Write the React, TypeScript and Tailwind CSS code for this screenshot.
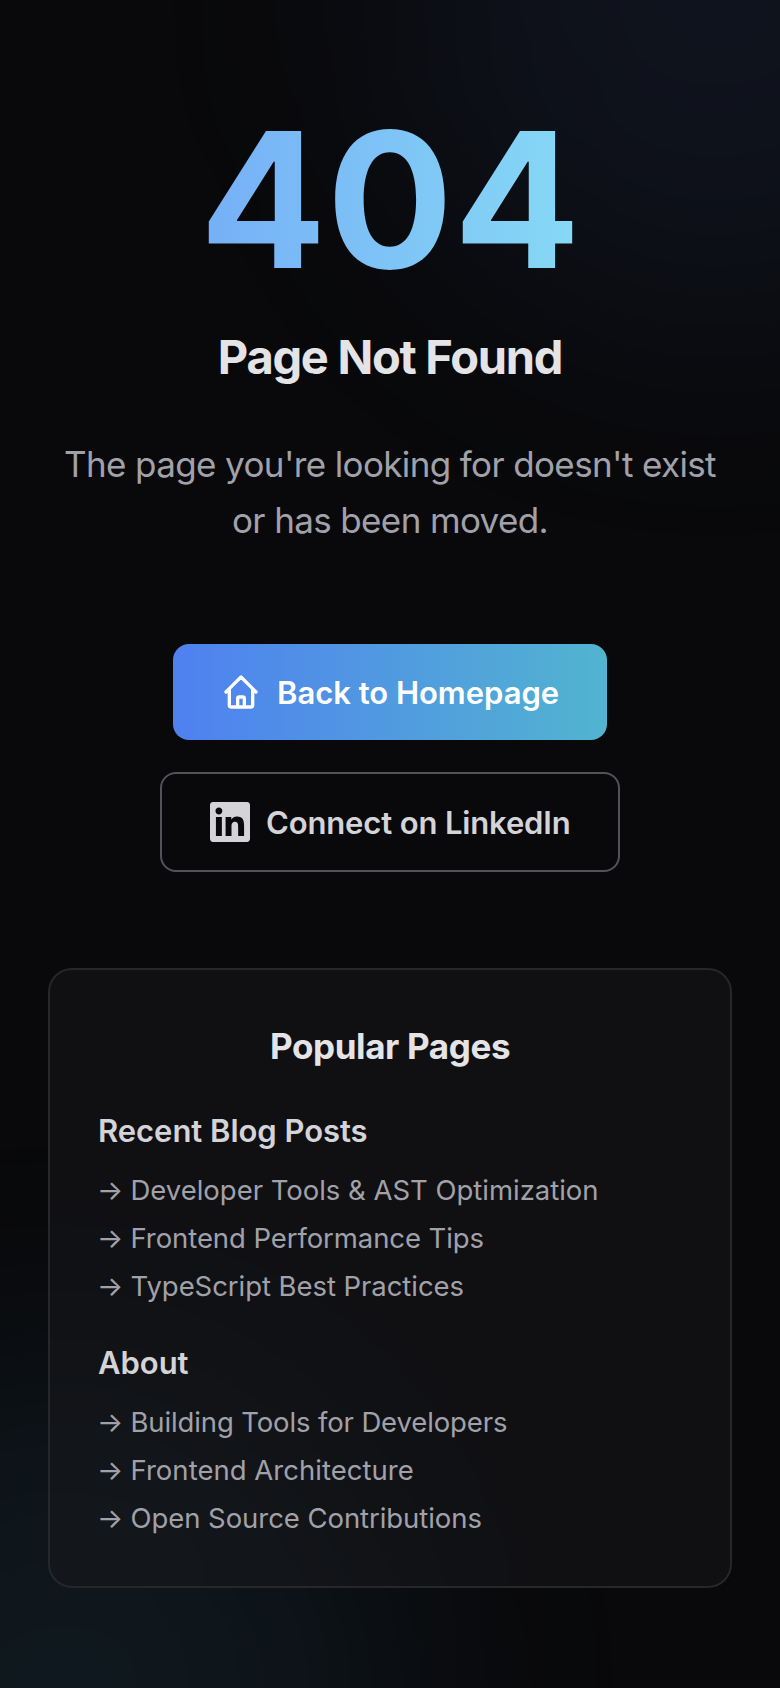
const sections = [
  {
    title: "Recent Blog Posts",
    links: [
      { label: "Developer Tools & AST Optimization", tracking: "tracking-[-0.02px]" },
      { label: "Frontend Performance Tips", tracking: "tracking-[-0.08px]" },
      { label: "TypeScript Best Practices", tracking: "tracking-[-0.06px]" },
    ],
  },
  {
    title: "About",
    links: [
      { label: "Building Tools for Developers", tracking: "tracking-[-0.13px]" },
      { label: "Frontend Architecture", tracking: "tracking-[0.02px]" },
      { label: "Open Source Contributions", tracking: "tracking-[-0.06px]" },
    ],
  },
];

function HomeIcon() {
  return (
    <svg className="size-10 shrink-0" viewBox="0 0 24 24" fill="none" stroke="currentColor" strokeWidth={2} strokeLinecap="round" strokeLinejoin="round">
      <path d="M3 12l2-2m0 0l7-7 7 7M5 10v10a1 1 0 001 1h3m10-11l2 2m-2-2v10a1 1 0 01-1 1h-3m-6 0a1 1 0 001-1v-4a1 1 0 011-1h2a1 1 0 011 1v4a1 1 0 001 1m-6 0h6" />
    </svg>
  );
}

function LinkedInIcon() {
  return (
    <svg className="size-10 shrink-0" viewBox="0 0 24 24" fill="currentColor">
      <path d="M20.447 20.452h-3.554v-5.569c0-1.328-.027-3.037-1.852-3.037-1.853 0-2.136 1.445-2.136 2.939v5.667H9.351V9h3.414v1.561h.046c.477-.9 1.637-1.85 3.37-1.85 3.601 0 4.267 2.37 4.267 5.455v6.286zM5.337 7.433c-1.144 0-2.063-.926-2.063-2.065 0-1.138.92-2.063 2.063-2.063 1.14 0 2.064.925 2.064 2.063 0 1.139-.925 2.065-2.064 2.065zm1.782 13.019H3.555V9h3.564v11.452zM22.225 0H1.771C.792 0 0 .774 0 1.729v20.542C0 23.227.792 24 1.771 24h20.451C23.2 24 24 23.227 24 22.271V1.729C24 .774 23.2 0 22.222 0h.003z" />
    </svg>
  );
}

export default function App() {
  return (
    <main className="relative min-h-screen overflow-hidden bg-[#09090b] px-12 pt-[104px] pb-[100px] font-[Inter,sans-serif]">
      <div className="absolute -top-80 -right-64 size-[640px] rounded-full bg-[#5c8ff0]/8 blur-[128px]" />
      <div className="absolute -bottom-80 -left-64 size-[640px] rounded-full bg-[#52b0e0]/9 blur-[128px]" />

      <div className="relative flex flex-col items-center">
        <div className="w-full bg-linear-to-r/srgb from-[#6f9ef7] to-[#8deaf5] bg-clip-text text-center text-[188px] leading-[192px] font-bold text-transparent">
          404
        </div>
        <h1 className="mt-[33px] text-[47px] leading-[56px] font-bold tracking-[-1.27px] text-[#e4e4e7]">Page Not Found</h1>
        <p className="mt-[51px] text-center text-[35px] leading-[56px] tracking-[-0.63px] text-[#a1a1aa]">
          The page you're looking for doesn't exist
          <br />
          or has been moved.
        </p>

        <div className="mt-24 flex flex-col items-center gap-8">
          <a className="flex h-24 w-[434px] items-center gap-4 rounded-2xl bg-linear-to-r/srgb from-[#4f80f0] to-[#52b4d0] px-12 text-[31px] font-semibold tracking-[-0.02px] whitespace-nowrap text-white">
            <HomeIcon />
            <span className="pt-0.5">Back to Homepage</span>
          </a>
          <a className="flex h-[100px] w-[460px] items-center gap-4 rounded-2xl border-2 border-[#52525b] px-12 text-[31px] font-semibold tracking-[-0.14px] whitespace-nowrap text-[#d4d4d8]">
            <LinkedInIcon />
            <span className="pt-0.5">Connect on LinkedIn</span>
          </a>
        </div>

        <section className="mt-24 w-full rounded-3xl border-2 border-[#27272a] bg-[#18181b]/50 p-12">
          <h2 className="text-center text-[35px] leading-[56px] font-bold tracking-[-0.38px] text-[#e4e4e7]">Popular Pages</h2>
          {sections.map((section) => (
            <div key={section.title} className="mt-[33px]">
              <h3 className="text-[31px] leading-[48px] font-semibold tracking-[-0.04px] text-[#d4d4d8]">{section.title}</h3>
              <ul className="mt-[15px] flex flex-col gap-2 text-[27.5px] leading-[40px] text-[#a1a1aa]">
                {section.links.map((link) => (
                  <li key={link.label} className="flex">
                    <span className="-ml-px w-[33.5px]">→</span>
                    <span className={link.tracking}>{link.label}</span>
                  </li>
                ))}
              </ul>
            </div>
          ))}
        </section>
      </div>
    </main>
  );
}
